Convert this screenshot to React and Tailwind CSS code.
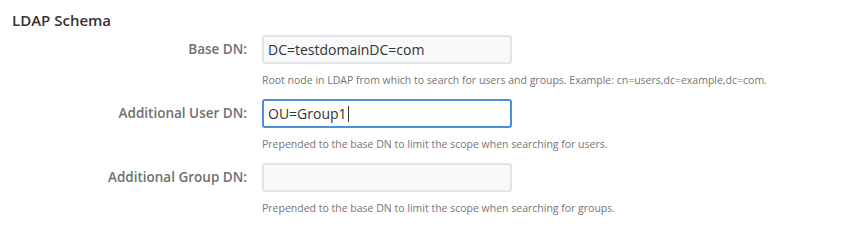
import React from 'react';

const rows = [
  {
    label: 'Base DN:',
    value: 'DC=testdomainDC=com',
    help: 'Root node in LDAP from which to search for users and groups. Example: cn=users,dc=example,dc=com.',
  },
  {
    label: 'Additional User DN:',
    value: 'OU=Group1',
    help: 'Prepended to the base DN to limit the scope when searching for users.',
    focused: true,
  },
  {
    label: 'Additional Group DN:',
    value: '',
    help: 'Prepended to the base DN to limit the scope when searching for groups.',
  },
];

function Field({ label, value, help, focused }) {
  return (
    <div className="grid grid-cols-[235px_250px] gap-x-[15px] mb-[11px]">
      <div className="flex items-center justify-end h-[29px] text-[13.5px] font-semibold text-[#707070]">
        {label}
      </div>
      <div>
        <div
          className={`h-[29px] rounded-[3px] border-2 px-[4px] flex items-center text-[14px] text-[#333] ${
            focused ? 'border-[#4a8fd8] bg-white' : 'border-[#e1e3e7] bg-[#f8f9fb]'
          }`}
        >
          {value}
          {focused && <span className="inline-block w-px h-[16px] bg-[#333] ml-[1px]" />}
        </div>
        <p className="mt-[8px] text-[10.5px] leading-4 text-[#757575] whitespace-nowrap">{help}</p>
      </div>
    </div>
  );
}

export default function App() {
  return (
    <div
      className="w-[862px] h-[245px] bg-white px-3 pt-[10px]"
      style={{ fontFamily: '"Open Sans", "Noto Sans", sans-serif' }}
    >
      <h2 className="text-[15px] leading-5 font-semibold text-[#333] mb-[5px]">LDAP Schema</h2>
      {rows.map((r) => (
        <Field key={r.label} {...r} />
      ))}
    </div>
  );
}
